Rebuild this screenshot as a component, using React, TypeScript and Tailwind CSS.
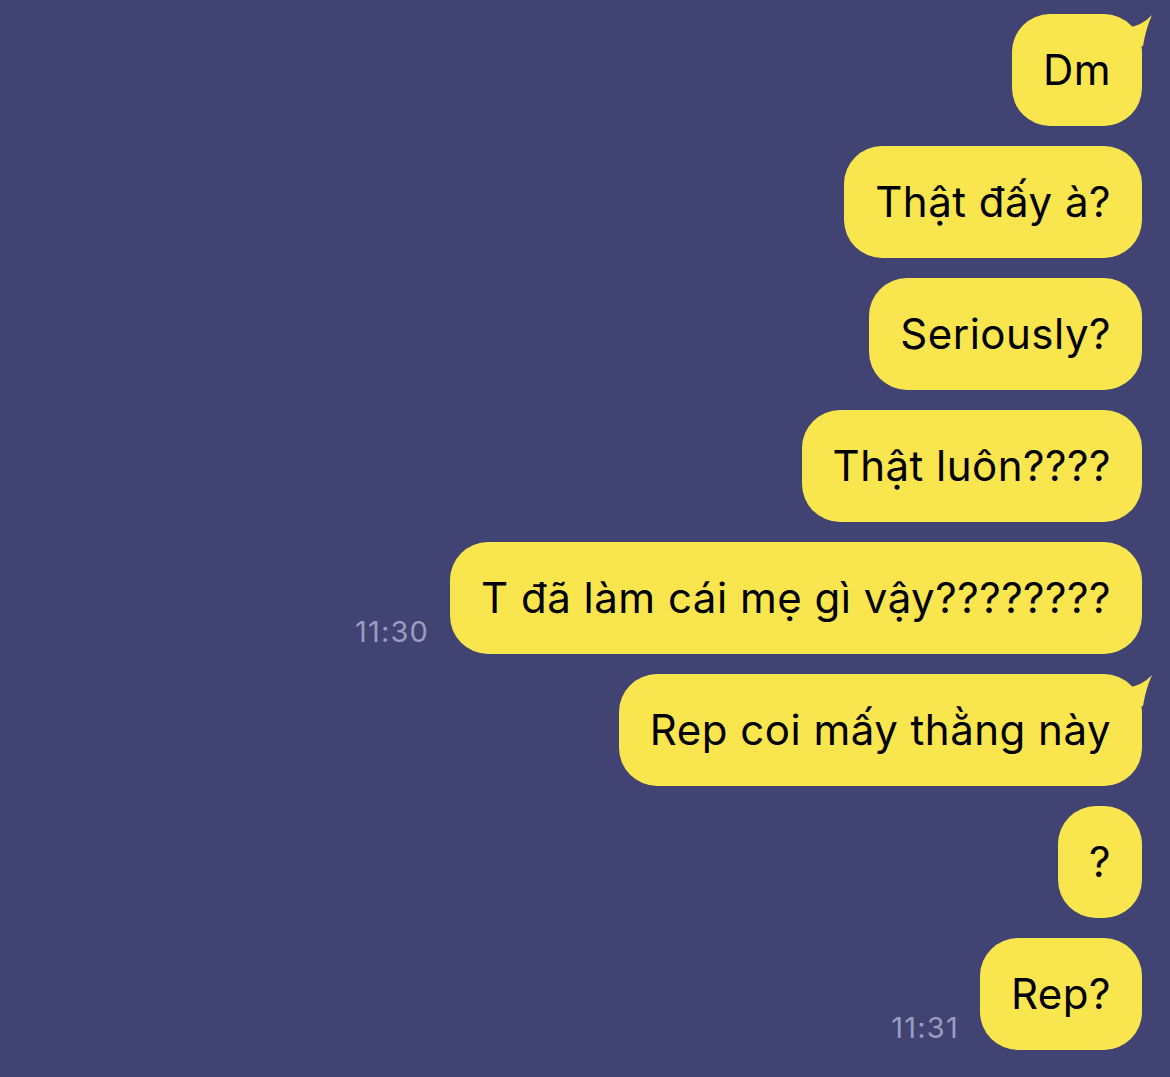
import React from "react";

type Msg = { text: string; time?: string; tail?: boolean };

const msgs: Msg[] = [
  { text: "Dm", tail: true },
  { text: "Thật đấy à?" },
  { text: "Seriously?" },
  { text: "Thật luôn????" },
  { text: "T đã làm cái mẹ gì vậy????????", time: "11:30" },
  { text: "Rep coi mấy thằng này", tail: true },
  { text: "?" },
  { text: "Rep?", time: "11:31" },
];

function Tail() {
  return (
    <svg
      className="absolute -right-[12px] -top-[2px]"
      width="30"
      height="40"
      viewBox="0 0 30 40"
    >
      <path d="M2 16 Q18 14 28 3 Q22 16 19 34 L2 38 Z" fill="#F9E54D" />
    </svg>
  );
}

export default function App() {
  return (
    <div
      className="w-[1170px] h-[1077px] bg-[#414372] overflow-hidden flex flex-col items-end gap-[20px] pt-[14px] pr-[28px]"
      style={{ fontFamily: "Inter, 'Noto Sans', sans-serif" }}
    >
      {msgs.map((m, i) => (
        <div key={i} className="flex items-end gap-[21px]">
          {m.time && (
            <span className="text-[29px] leading-none text-[#9b9cc0] mb-[8px] tracking-[1.2px]">
              {m.time}
            </span>
          )}
          <div className="relative">
            {m.tail && <Tail />}
            <div className="relative h-[112px] flex items-center px-[31px] rounded-[38px] bg-[#F9E54D] text-black text-[42px] leading-none tracking-[0.5px] whitespace-nowrap">
              {m.text}
            </div>
          </div>
        </div>
      ))}
    </div>
  );
}
